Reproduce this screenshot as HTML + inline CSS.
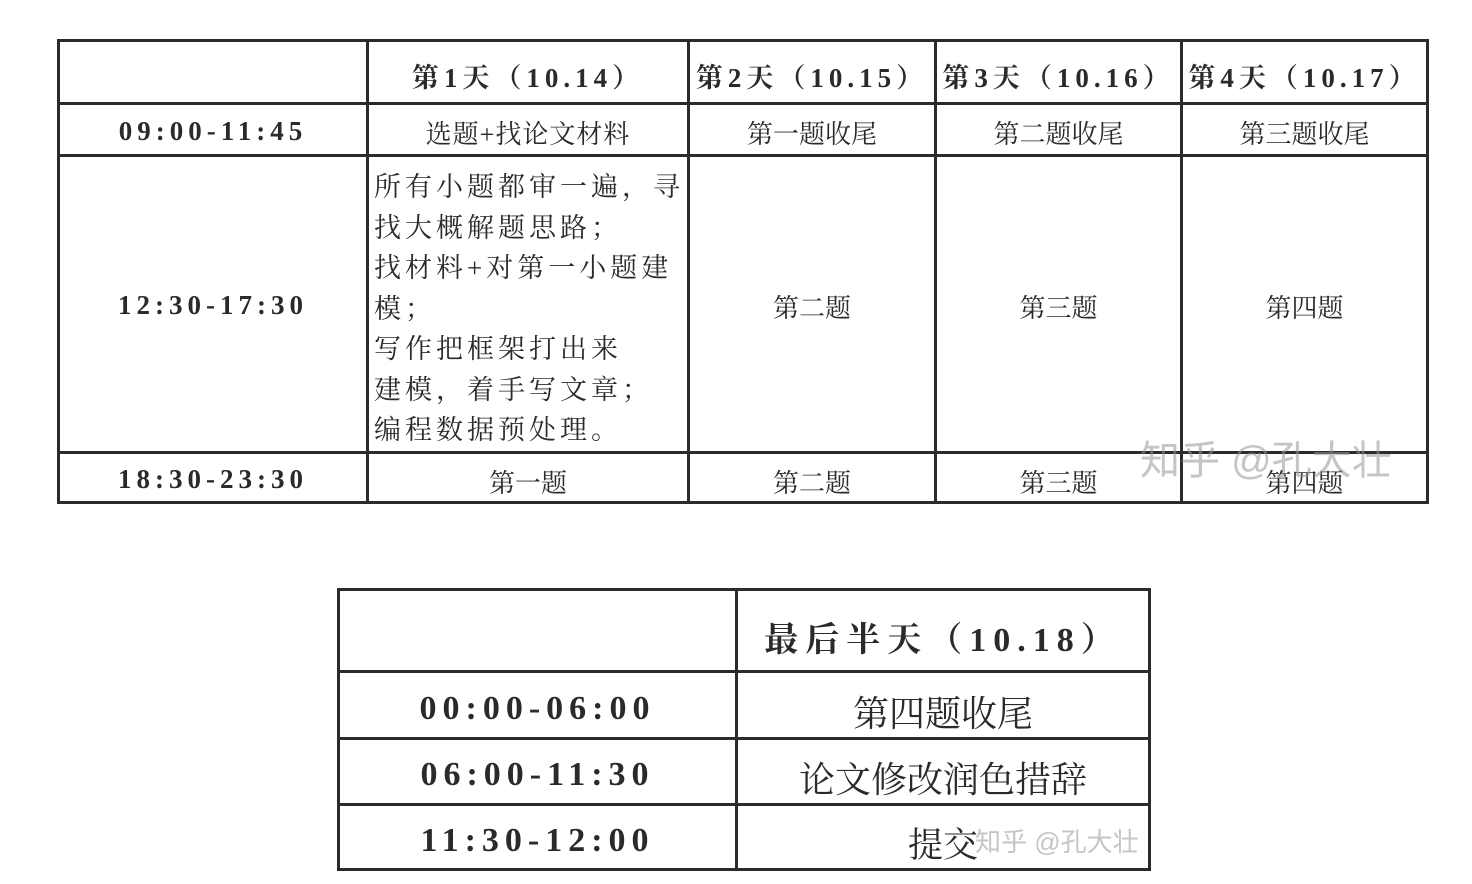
<!DOCTYPE html>
<html><head><meta charset="utf-8"><style>
html,body{margin:0;padding:0;background:#fff;}
body{width:1472px;height:884px;position:relative;overflow:hidden;font-family:"Liberation Serif","Noto Serif CJK SC",serif;color:#2a2a2a;}
.h{position:absolute;background:#2b2b2b;height:3px;}
.v{position:absolute;background:#2b2b2b;width:3px;}
.t{position:absolute;text-align:center;white-space:nowrap;}
.b{font-weight:bold;}
.wm{position:absolute;color:rgba(150,150,150,0.55);font-family:"Liberation Sans","Noto Sans CJK SC",sans-serif;white-space:nowrap;}
</style></head><body>
<!-- table 1 -->
<div class="h" style="left:58px;top:39px;width:1371px;"></div>
<div class="h" style="left:58px;top:102px;width:1371px;"></div>
<div class="h" style="left:58px;top:154px;width:1371px;"></div>
<div class="h" style="left:58px;top:451px;width:1371px;"></div>
<div class="h" style="left:58px;top:501px;width:1371px;"></div>
<div class="v" style="left:57px;top:39px;height:465px;"></div>
<div class="v" style="left:366px;top:39px;height:465px;"></div>
<div class="v" style="left:687px;top:39px;height:465px;"></div>
<div class="v" style="left:934px;top:39px;height:465px;"></div>
<div class="v" style="left:1180px;top:39px;height:465px;"></div>
<div class="v" style="left:1426px;top:39px;height:465px;"></div>

<div class="t b" style="left:369px;width:318px;top:56px;font-size:27px;letter-spacing:5px;">第1天（10.14）</div>
<div class="t b" style="left:690px;width:244px;top:56px;font-size:27px;letter-spacing:5px;">第2天（10.15）</div>
<div class="t b" style="left:937px;width:243px;top:56px;font-size:27px;letter-spacing:5px;">第3天（10.16）</div>
<div class="t b" style="left:1183px;width:243px;top:56px;font-size:27px;letter-spacing:5px;">第4天（10.17）</div>

<div class="t b" style="left:60px;width:306px;top:116px;font-size:27px;letter-spacing:5px;">09:00-11:45</div>
<div class="t b" style="left:60px;width:306px;top:290px;font-size:27px;letter-spacing:5px;">12:30-17:30</div>
<div class="t b" style="left:60px;width:306px;top:464px;font-size:27px;letter-spacing:5px;">18:30-23:30</div>

<div class="t" style="left:369px;width:318px;top:114px;font-size:26px;letter-spacing:1px;">选题+找论文材料</div>
<div class="t" style="left:690px;width:244px;top:114px;font-size:26px;">第一题收尾</div>
<div class="t" style="left:937px;width:243px;top:114px;font-size:26px;">第二题收尾</div>
<div class="t" style="left:1183px;width:243px;top:114px;font-size:26px;">第三题收尾</div>

<div class="t" style="left:374px;top:167px;font-size:27px;letter-spacing:4px;line-height:40.5px;text-align:left;">所有小题都审一遍，寻<br>找大概解题思路；<br>找材料+对第一小题建<br>模；<br>写作把框架打出来<br>建模，着手写文章；<br>编程数据预处理。</div>
<div class="t" style="left:690px;width:244px;top:288px;font-size:26px;">第二题</div>
<div class="t" style="left:937px;width:243px;top:288px;font-size:26px;">第三题</div>
<div class="t" style="left:1183px;width:243px;top:288px;font-size:26px;">第四题</div>

<div class="t" style="left:369px;width:318px;top:463px;font-size:26px;">第一题</div>
<div class="t" style="left:690px;width:244px;top:463px;font-size:26px;">第二题</div>
<div class="t" style="left:937px;width:243px;top:463px;font-size:26px;">第三题</div>
<div class="t" style="left:1183px;width:243px;top:463px;font-size:26px;">第四题</div>
<div class="wm" style="left:1140px;top:428px;font-size:40px;">知乎 @孔大壮</div>

<!-- table 2 -->
<div class="h" style="left:338px;top:588px;width:813px;"></div>
<div class="h" style="left:338px;top:670px;width:813px;"></div>
<div class="h" style="left:338px;top:737px;width:813px;"></div>
<div class="h" style="left:338px;top:803px;width:813px;"></div>
<div class="h" style="left:338px;top:868px;width:813px;"></div>
<div class="v" style="left:337px;top:588px;height:283px;"></div>
<div class="v" style="left:735px;top:588px;height:283px;"></div>
<div class="v" style="left:1148px;top:588px;height:283px;"></div>

<div class="t b" style="left:738px;width:410px;top:612px;font-size:34px;letter-spacing:7px;">最后半天（10.18）</div>
<div class="t b" style="left:340px;width:395px;top:690px;font-size:34px;letter-spacing:6px;">00:00-06:00</div>
<div class="t b" style="left:340px;width:395px;top:756px;font-size:34px;letter-spacing:6px;">06:00-11:30</div>
<div class="t b" style="left:340px;width:395px;top:822px;font-size:34px;letter-spacing:6px;">11:30-12:00</div>
<div class="t" style="left:738px;width:410px;top:686px;font-size:36px;">第四题收尾</div>
<div class="t" style="left:738px;width:410px;top:752px;font-size:36px;">论文修改润色措辞</div>
<div class="t" style="left:908px;top:818px;font-size:35px;">提交</div>
<div class="wm" style="left:975px;top:822px;font-size:26px;">知乎 @孔大壮</div>
</body></html>
